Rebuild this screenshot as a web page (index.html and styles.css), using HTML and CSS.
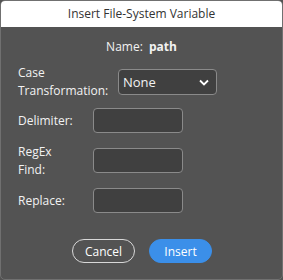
FILE: index.html
```html
<!DOCTYPE html>
<html lang="en">
<head>
  <meta charset="UTF-8" />
  <title>Insert File-System Variable</title>
  <link rel="stylesheet" href="styles.css">
</head>
<body>

  <div class="dialog">
    <div class="title-bar">Insert File-System Variable</div>

    <div class="content">
      <div class="name-row">Name: <b>path</b></div>

      <div class="row case-row">
        <label class="label">Case<br>Transformation:</label>
        <div class="select">
          <span>None</span>
          <svg width="10" height="7" viewBox="0 0 10 7"><path d="M1 1.5 L5 5.5 L9 1.5" fill="none" stroke="#fff" stroke-width="1.8"/></svg>
        </div>
      </div>

      <div class="row">
        <label class="label short">Delimiter:</label>
        <input type="text" class="field" />
      </div>

      <div class="row">
        <label class="label short">RegEx<br>Find:</label>
        <input type="text" class="field" />
      </div>

      <div class="row">
        <label class="label short">Replace:</label>
        <input type="text" class="field" />
      </div>

      <div class="buttons">
        <button class="btn cancel">Cancel</button>
        <button class="btn insert">Insert</button>
      </div>
    </div>
  </div>

</body>
</html>
```

FILE: styles.css
```css
* { margin: 0; padding: 0; box-sizing: border-box; }
body {
  font-family: 'Open Sans', 'Noto Sans', sans-serif;
  background-color: #535353;
  width: 283px;
  height: 280px;
}

.dialog {
  width: 283px;
  height: 280px;
  border: 1px solid #707070;
  border-radius: 5px;
  overflow: hidden;
  background-color: #535353;
}

.title-bar {
  height: 26px;
  background-color: #fff;
  color: #333;
  font-size: 12px;
  text-align: center;
  line-height: 26px;
}

.content {
  padding: 12px 0 0 17px;
  color: #f2f2f2;
  font-size: 12px;
}

.name-row {
  text-align: center;
  margin-left: -17px;
  line-height: 16px;
}
.name-row b { margin-left: 3px; }

.row {
  display: flex;
  align-items: center;
  height: 25px;
  margin-top: 15px;
}
.case-row {
  height: 26px;
  margin-top: 14px;
  margin-bottom: -2px;
}

.label {
  line-height: 18px;
  width: 100px;
}
.label.short { width: 75px; }

.select {
  width: 99px;
  height: 26px;
  border: 1px solid #8a8a8a;
  border-radius: 4px;
  background-color: #404040;
  display: flex;
  align-items: center;
  justify-content: space-between;
  padding: 0 7px 0 4px;
  font-size: 13px;
}

.field {
  width: 90px;
  height: 25px;
  border: 1px solid #8a8a8a;
  border-radius: 4px;
  background-color: #404040;
}

.buttons {
  display: flex;
  gap: 14px;
  margin: 26px 0 0 54px;
}

.btn {
  width: 63px;
  height: 24px;
  border-radius: 12px;
  font-family: inherit;
  font-size: 12px;
  color: #fff;
}
.cancel {
  background: transparent;
  border: 1px solid #d8d8d8;
}
.insert {
  background-color: #3b8fe9;
  border: 1px solid #3b8fe9;
}
```
